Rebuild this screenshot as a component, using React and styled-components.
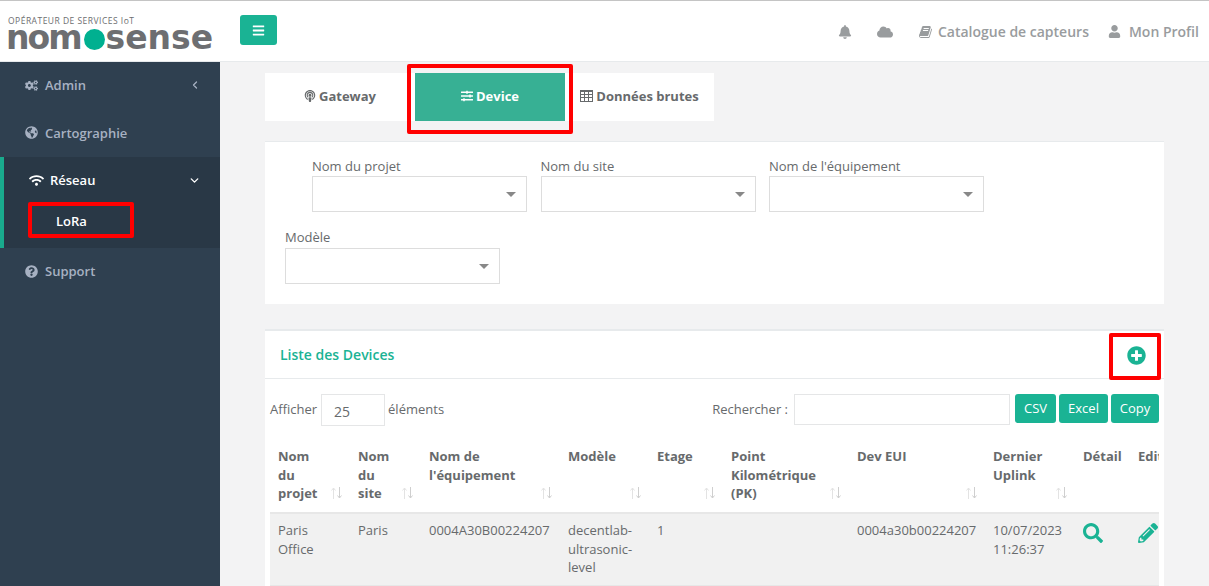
import React from "react";
import styled, { createGlobalStyle } from "styled-components";
import {
  FaBars, FaBell, FaCloud, FaUser, FaCogs, FaGlobeAmericas, FaWifi, FaQuestionCircle,
  FaPlusCircle, FaSearch, FaPencilAlt, FaSlidersH, FaPodcast,
} from "react-icons/fa";
import { ChevronLeft, ChevronDown } from "lucide-react";

const GlobalStyle = createGlobalStyle`
  html, body {
    margin: 0;
    height: 586px;
    overflow: hidden;
    background: #f3f3f4;
    font-family: "Open Sans", sans-serif;
    font-size: 13px;
    color: #676a6c;
  }
  * { box-sizing: border-box; }
`;

const Page = styled.div`
  width: 1209px;
  height: 586px;
  overflow: hidden;
  display: flex;
  flex-direction: column;
`;

// ------------------------------------------------------------------------header
const Header = styled.header`
  height: 62px;
  flex: none;
  display: flex;
  align-items: center;
  background: #fff;
  border-top: 1px solid #c4c4c4;
  border-bottom: 1px solid #e7eaec;
`;
const LogoWrap = styled.div`
  width: 240px;
  padding: 3px 0 0 8px;
  flex: none;
`;
const LogoTag = styled.div`
  font-size: 8.5px;
  line-height: 9px;
  letter-spacing: 0.48px;
  color: #6d6e71;
  white-space: nowrap;
`;
const LogoName = styled.div`
  display: flex;
  align-items: center;
  height: 22px;
  margin: 2px 0 0 -2px;
  font-family: "DejaVu Sans", sans-serif;
  font-weight: 700;
  font-size: 33px;
  line-height: 22px;
  color: #6d6e71;
`;
const LogoNom = styled.span`
  letter-spacing: -2px;
`;
const LogoDot = styled.span`
  width: 21px;
  height: 21px;
  border-radius: 50%;
  background: #00b090;
  margin: 3px 1px 0 3px;
  flex: none;
`;
const MenuButton = styled.button`
  width: 37px;
  height: 30px;
  margin-top: -2px;
  border: none;
  border-radius: 3px;
  background: #1ab394;
  color: #fff;
  display: flex;
  align-items: center;
  justify-content: center;
  font-size: 13px;
  padding: 0;
`;
const TopNav = styled.nav`
  margin-left: auto;
  display: flex;
  align-items: center;
  padding: 1px 10px 0 0;
  color: #999c9e;
  font-size: 14px;
  font-weight: 600;
`;
const TopItem = styled.span`
  display: flex;
  align-items: center;
  gap: ${(p) => p.$gap || 5}px;
  margin-left: ${(p) => p.$left || 0}px;
  font-size: 14px;
  svg { font-size: ${(p) => p.$icon || 14}px; }
`;

// ------------------------------------------------------------------------sidebar
const Body = styled.div`
  flex: 1;
  display: flex;
  min-height: 0;
`;
const Sidebar = styled.aside`
  width: 220px;
  flex: none;
  background: #2f4050;
  font-weight: 600;
  font-size: 13px;
  color: #a7b1c2;
`;
const SideItem = styled.div`
  height: ${(p) => p.$h}px;
  display: flex;
  align-items: center;
  padding: 0 19px 0 25px;
  gap: 7px;
  svg { font-size: 13px; }
`;
const SideArrow = styled.span`
  margin-left: auto;
  display: flex;
`;
const ActiveGroup = styled.div`
  position: relative;
  height: 91px;
  background: #293846;
  border-left: 4px solid #19aa8d;
  color: #fff;
`;
const ActiveHead = styled.div`
  height: 46px;
  display: flex;
  align-items: center;
  padding: 0 19px 0 25px;
  gap: 6px;
  svg { font-size: 15px; }
`;
const SubItem = styled.div`
  padding: 9px 0 0 52px;
  line-height: 18px;
  color: #fff;
`;

// ------------------------------------------------------------------------content
const Main = styled.main`
  flex: 1;
  min-width: 0;
  padding: 11px 45px 0;
`;
const Tabs = styled.div`
  width: 449px;
  height: 48px;
  display: flex;
  background: #fff;
  font-weight: 700;
  font-size: 13px;
  color: #676a6c;
`;
const Tab = styled.div`
  width: ${(p) => p.$w}px;
  display: flex;
  align-items: center;
  justify-content: center;
  gap: 3px;
  padding-bottom: 2px;
  background: ${(p) => (p.$active ? "#37b094" : "#fff")};
  color: ${(p) => (p.$active ? "#fff" : "#676a6c")};
  svg { font-size: 12px; }
`;
const Annotated = styled.div`
  position: relative;
`;
const RedBox = styled.div`
  position: absolute;
  left: ${(p) => p.$x}px;
  top: ${(p) => p.$y}px;
  width: ${(p) => p.$w}px;
  height: ${(p) => p.$h}px;
  border: 4px solid #f00;
  border-radius: 2px;
  pointer-events: none;
`;
const FilterCard = styled.section`
  margin-top: 20px;
  height: 163px;
  background: #fff;
  border-top: 1px solid #e7eaec;
  padding-top: 15px;
`;
const FilterRow = styled.div`
  display: flex;
  gap: 13.5px;
  padding-left: ${(p) => p.$left}px;
  margin-bottom: 16px;
`;
const Field = styled.div`
  width: 215px;
`;
const FieldLabel = styled.label`
  display: block;
  line-height: 18px;
  height: ${(p) => p.$h || 19}px;
`;
const SelectBox = styled.div`
  height: 36px;
  border: 1px solid #ddd;
  background: #fff;
  position: relative;
  &::after {
    content: "";
    position: absolute;
    right: 10px;
    top: 15px;
    border-left: 5px solid transparent;
    border-right: 5px solid transparent;
    border-top: 5px solid #888;
  }
`;
const ListCard = styled.section`
  margin-top: 25px;
  background: #fff;
  border-top: 2px solid #e7eaec;
  height: 300px;
`;
const ListHead = styled.div`
  height: 48px;
  display: flex;
  align-items: center;
  justify-content: space-between;
  padding: 0 18px 0 15px;
  border-bottom: 1px solid #e7eaec;
`;
const ListTitle = styled.h5`
  margin: 0;
  font-size: 14px;
  font-weight: 600;
  color: #1ab394;
`;
const AddIcon = styled.span`
  display: flex;
  margin-top: 2px;
  font-size: 19px;
  color: #1ab394;
`;
const ListBody = styled.div`
  padding: 15px 5px 0;
`;
const Toolbar = styled.div`
  display: flex;
  align-items: flex-start;
  height: 32px;
  line-height: 30px;
`;
const PageSize = styled.div`
  width: 64px;
  height: 32px;
  margin: 0 3px 0 4px;
  border: 1px solid #e5e6e7;
  padding: 8px 0 0 12px;
  font-size: 14px;
  line-height: 18px;
`;
const SearchLabel = styled.span`
  margin-left: auto;
`;
const SearchInput = styled.div`
  width: 216px;
  height: 31px;
  margin: 0 5px 0 6px;
  border: 1px solid #e5e6e7;
`;
const ExportButton = styled.button`
  width: ${(p) => p.$w}px;
  height: 29px;
  padding: 0 0 2px;
  margin-left: ${(p) => (p.$first ? 0 : 3)}px;
  border: none;
  border-radius: 3px;
  background: #1ab394;
  color: #fff;
  font-family: inherit;
  font-size: 13px;
`;
const TableClip = styled.div`
  margin-top: 10px;
  overflow: hidden;
  width: 889px;
`;
const Table = styled.table`
  width: 930px;
  table-layout: fixed;
  border-collapse: collapse;
`;
const Th = styled.th`
  position: relative;
  padding: 11px 8px 8px;
  height: 77px;
  text-align: left;
  vertical-align: top;
  font-weight: 700;
  line-height: 18.6px;
  border-bottom: 2px solid #e7e7e7;
`;
const Td = styled.td`
  padding: 7px 8px 8px;
  vertical-align: top;
  line-height: 18.6px;
  background: #f1f1f1;
  border-bottom: 1px solid #e7e7e7;
`;
const SortMark = styled.svg`
  position: absolute;
  right: 8px;
  bottom: 13px;
`;
const RowIcon = styled.span`
  display: flex;
  color: #1ab394;
  font-size: 20px;
  padding-top: 2px;
`;

const BookIcon = () => (
  <svg width="14" height="14" viewBox="0 0 1792 1792" fill="currentColor">
    <path d="M1639 478q40 57 18 129l-275 906q-19 64-76.5 107.5t-122.5 43.5h-923q-77 0-148.5-53.5t-99.5-131.5q-24-67-2-127 0-4 3-27t4-37q1-8-3-21.5t-3-19.5q2-11 8-21t16.5-23.5 16.5-23.5q23-38 45-91.5t30-91.5q3-10 .5-30t-.5-28q3-11 17-28t17-23q21-36 42-92t25-90q1-9-2.5-32t.5-28q4-13 22-30.5t22-22.5q19-26 42.5-84.5t27.5-96.5q1-8-3-25.5t-2-26.5q2-8 9-18t18-23 17-21q8-12 16.5-30.5t15-35 16-36 19.5-32 26.5-23.5 36-11.5 47.5 5.5l-1 3q38-9 51-9h761q74 0 114 56t18 130l-274 906q-36 119-71.5 153.5t-128.5 34.5h-869q-27 0-38 15-11 16-1 43 24 70 144 70h923q29 0 56-15.5t35-41.5l300-987q7-22 5-57 38 15 59 43zm-1064 2q-4 13 2 22.5t20 9.5h608q13 0 25.5-9.5t16.5-22.5l21-64q4-13-2-22.5t-20-9.5h-608q-13 0-25.5 9.5t-16.5 22.5zm-83 256q-4 13 2 22.5t20 9.5h608q13 0 25.5-9.5t16.5-22.5l21-64q4-13-2-22.5t-20-9.5h-608q-13 0-25.5 9.5t-16.5 22.5z" />
  </svg>
);

// grille du fa-table, plus fine que celle de react-icons
const GridIcon = () => (
  <svg width="13" height="12" viewBox="0 0 13 12" fill="none" stroke="currentColor" strokeWidth="1">
    <rect x="0.5" y="0.5" width="12" height="11" />
    <path d="M0 1.5h13M0 4.5h13M0 7.5h13M4.5 1v11M8.5 1v11" />
  </svg>
);

const SortArrows = () => (
  <SortMark width="11" height="12" viewBox="0 0 11 12" fill="none" strokeWidth="1">
    <path d="M2.5 12V1M0.5 3.5l2-2.5 2 2.5" stroke="#e3e3e3" />
    <path d="M8.5 0v11M6.5 8.5l2 2.5 2-2.5" stroke="#cfcfcf" />
  </SortMark>
);

const columns = [
  { w: 80, title: ["Nom", "du", "projet"], sort: true },
  { w: 71, title: ["Nom", "du", "site"], sort: true },
  { w: 139, title: ["Nom de", "l'équipement"], sort: true },
  { w: 89, title: ["Modèle"], sort: true },
  { w: 74, title: ["Etage"], sort: true },
  { w: 126, title: ["Point", "Kilométrique", "(PK)"], sort: true },
  { w: 136, title: ["Dev EUI"], sort: true },
  { w: 90, title: ["Dernier", "Uplink"], sort: true },
  { w: 55, title: ["Détail"] },
  { w: 70, title: ["Editer"] },
];

const lines = (arr) =>
  arr.map((t, i) => (
    <React.Fragment key={i}>
      {i > 0 && <br />}
      {t}
    </React.Fragment>
  ));

export default function App() {
  return (
    <Page>
      <GlobalStyle />
      <Header>
        <LogoWrap>
          <LogoTag>OPÉRATEUR DE SERVICES IoT</LogoTag>
          <LogoName>
            <LogoNom>nom</LogoNom><LogoDot />sense
          </LogoName>
        </LogoWrap>
        <MenuButton><FaBars /></MenuButton>
        <TopNav>
          <TopItem $icon={14}><FaBell /></TopItem>
          <TopItem $left={25} $icon={16}><FaCloud /></TopItem>
          <TopItem $left={26}><BookIcon />Catalogue de capteurs</TopItem>
          <TopItem $left={19} $gap={8} $icon={13}><FaUser />Mon Profil</TopItem>
        </TopNav>
      </Header>
      <Body>
        <Sidebar>
          <SideItem $h={46}>
            <FaCogs />Admin
            <SideArrow><ChevronLeft size={12} strokeWidth={2.5} /></SideArrow>
          </SideItem>
          <SideItem $h={49}><FaGlobeAmericas />Cartographie</SideItem>
          <ActiveGroup>
            <ActiveHead>
              <FaWifi />Réseau
              <SideArrow><ChevronDown size={13} strokeWidth={2.5} /></SideArrow>
            </ActiveHead>
            <SubItem>LoRa</SubItem>
            <RedBox $x={24} $y={45} $w={106} $h={36} />
          </ActiveGroup>
          <SideItem $h={46}><FaQuestionCircle />Support</SideItem>
        </Sidebar>
        <Main>
          <Annotated>
            <Tabs>
              <Tab $w={150}><FaPodcast />Gateway</Tab>
              <Tab $w={150} $active><FaSlidersH />Device</Tab>
              <Tab $w={149}><GridIcon />Données brutes</Tab>
            </Tabs>
            <RedBox $x={142} $y={-9} $w={166} $h={70} />
          </Annotated>
          <FilterCard>
            <FilterRow $left={47}>
              <Field><FieldLabel>Nom du projet</FieldLabel><SelectBox /></Field>
              <Field><FieldLabel>Nom du site</FieldLabel><SelectBox /></Field>
              <Field><FieldLabel>Nom de l'équipement</FieldLabel><SelectBox /></Field>
            </FilterRow>
            <FilterRow $left={20}>
              <Field><FieldLabel $h={20}>Modèle</FieldLabel><SelectBox /></Field>
            </FilterRow>
          </FilterCard>
          <ListCard>
            <Annotated>
              <ListHead>
                <ListTitle>Liste des Devices</ListTitle>
                <AddIcon><FaPlusCircle /></AddIcon>
              </ListHead>
              <RedBox $x={844} $y={2} $w={52} $h={47} />
            </Annotated>
            <ListBody>
              <Toolbar>
                Afficher<PageSize>25</PageSize>éléments
                <SearchLabel>Rechercher :</SearchLabel>
                <SearchInput />
                <ExportButton $first $w={41}>CSV</ExportButton>
                <ExportButton $w={49}>Excel</ExportButton>
                <ExportButton $w={48}>Copy</ExportButton>
              </Toolbar>
              <TableClip>
                <Table>
                  <colgroup>
                    {columns.map((c, i) => <col key={i} style={{ width: c.w }} />)}
                  </colgroup>
                  <thead>
                    <tr>
                      {columns.map((c, i) => (
                        <Th key={i}>
                          {lines(c.title)}
                          {c.sort && <SortArrows />}
                        </Th>
                      ))}
                    </tr>
                  </thead>
                  <tbody>
                    <tr>
                      <Td>Paris<br />Office</Td>
                      <Td>Paris</Td>
                      <Td>0004A30B00224207</Td>
                      <Td>decentlab-<br />ultrasonic-<br />level</Td>
                      <Td>1</Td>
                      <Td></Td>
                      <Td>0004a30b00224207</Td>
                      <Td>10/07/2023<br />11:26:37</Td>
                      <Td><RowIcon><FaSearch /></RowIcon></Td>
                      <Td><RowIcon><FaPencilAlt /></RowIcon></Td>
                    </tr>
                  </tbody>
                </Table>
              </TableClip>
            </ListBody>
          </ListCard>
        </Main>
      </Body>
    </Page>
  );
}
